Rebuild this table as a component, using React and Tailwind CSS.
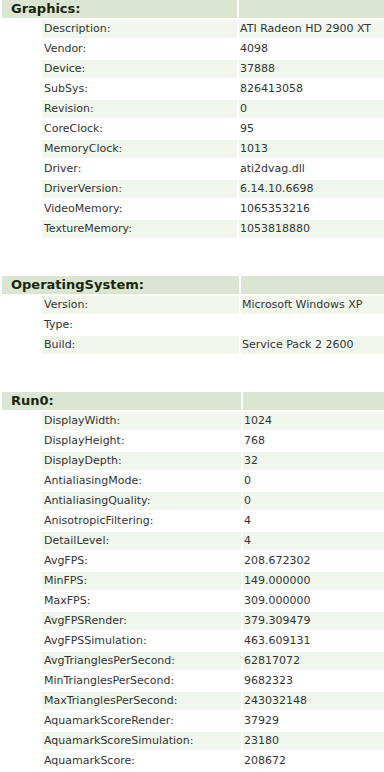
const sections = [
  {
    title: "Graphics:",
    cols: "grid-cols-[38px_195px_1fr]",
    rows: [
      ["Description:", "ATI Radeon HD 2900 XT"],
      ["Vendor:", "4098"],
      ["Device:", "37888"],
      ["SubSys:", "826413058"],
      ["Revision:", "0"],
      ["CoreClock:", "95"],
      ["MemoryClock:", "1013"],
      ["Driver:", "ati2dvag.dll"],
      ["DriverVersion:", "6.14.10.6698"],
      ["VideoMemory:", "1065353216"],
      ["TextureMemory:", "1053818880"],
    ],
  },
  {
    title: "OperatingSystem:",
    cols: "grid-cols-[38px_197px_1fr]",
    rows: [
      ["Version:", "Microsoft Windows XP"],
      ["Type:", ""],
      ["Build:", "Service Pack 2 2600"],
    ],
  },
  {
    title: "Run0:",
    cols: "grid-cols-[38px_199px_1fr]",
    rows: [
      ["DisplayWidth:", "1024"],
      ["DisplayHeight:", "768"],
      ["DisplayDepth:", "32"],
      ["AntialiasingMode:", "0"],
      ["AntialiasingQuality:", "0"],
      ["AnisotropicFiltering:", "4"],
      ["DetailLevel:", "4"],
      ["AvgFPS:", "208.672302"],
      ["MinFPS:", "149.000000"],
      ["MaxFPS:", "309.000000"],
      ["AvgFPSRender:", "379.309479"],
      ["AvgFPSSimulation:", "463.609131"],
      ["AvgTrianglesPerSecond:", "62817072"],
      ["MinTrianglesPerSecond:", "9682323"],
      ["MaxTrianglesPerSecond:", "243032148"],
      ["AquamarkScoreRender:", "37929"],
      ["AquamarkScoreSimulation:", "23180"],
      ["AquamarkScore:", "208672"],
    ],
  },
];

function Section({ section }) {
  return (
    <div className={`grid ${section.cols} gap-[2px] pl-[2px] auto-rows-[18px]`}>
      <div className="col-span-2 flex items-center bg-[#dbe6d2] pl-[9px] text-[13px] font-bold text-[#17260c]">
        {section.title}
      </div>
      <div className="bg-[#dbe6d2]" />
      {section.rows.map(([label, value], index) => {
        const bg = index % 2 === 0 ? "bg-[#f1f7ed]" : "bg-white";
        return [
          <div key={`i${index}`} />,
          <div key={`l${index}`} className={`flex items-center pl-[2px] pt-px ${bg}`}>
            {label}
          </div>,
          <div key={`v${index}`} className={`flex items-center pl-[1px] pt-px ${bg}`}>
            {value}
          </div>,
        ];
      })}
    </div>
  );
}

export default function App() {
  return (
    <div className="flex w-[384px] flex-col gap-[38px] overflow-hidden bg-white font-['DejaVu_Sans',sans-serif] text-[11px] text-[#333333]">
      {sections.map((section) => (
        <Section key={section.title} section={section} />
      ))}
    </div>
  );
}
